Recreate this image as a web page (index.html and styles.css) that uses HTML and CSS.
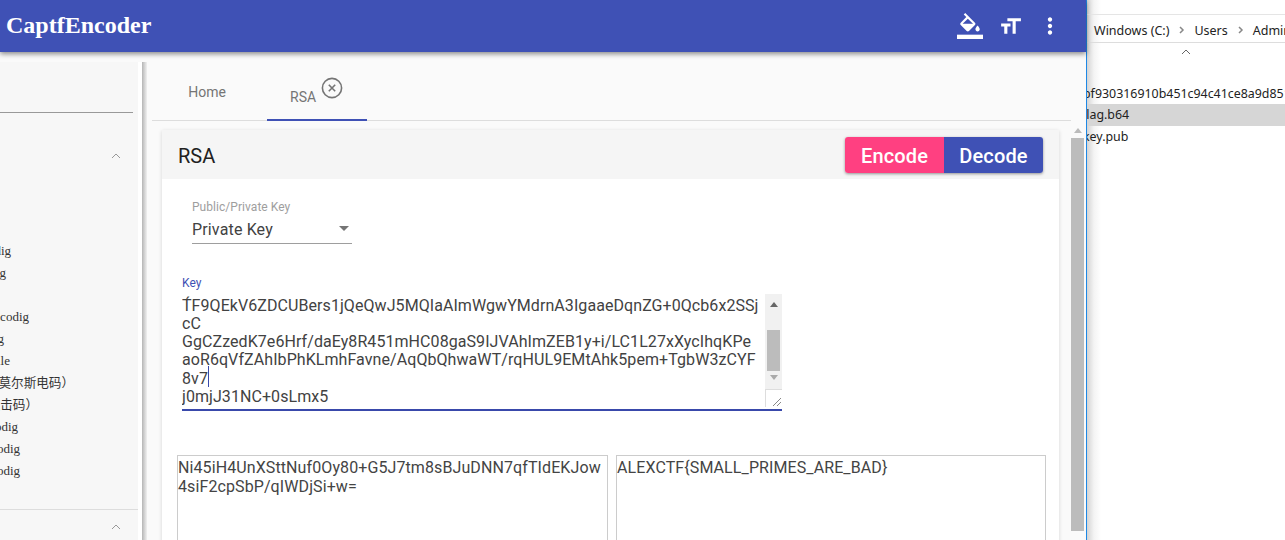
FILE: index.html
```html
<!DOCTYPE html>
<html lang="en">
<head>
<meta charset="utf-8">
<title>CaptfEncoder</title>
<link rel="stylesheet" href="styles.css">
</head>
<body>
<div class="screen">
  <div class="app">
    <header class="appbar">
      <h1 class="brand">CaptfEncoder</h1>
      <div class="actions">
        <button class="icon-btn"><svg class="i-fill" viewBox="0 0 24 24"><path d="M16.56 8.94L7.62 0 6.21 1.41l2.38 2.38-5.15 5.15c-.59.59-.59 1.54 0 2.12l5.5 5.5c.29.29.68.44 1.06.44s.77-.15 1.06-.44l5.5-5.5c.59-.58.59-1.53 0-2.12zM5.21 10L10 5.21 14.79 10H5.21zM19 11.5s-2 2.17-2 3.5c0 1.1.9 2 2 2s2-.9 2-2c0-1.33-2-3.5-2-3.5z"/><path d="M0 20h24v4H0z"/></svg></button>
        <button class="icon-btn"><svg class="i-size" viewBox="0 0 24 24"><path d="M9 4v3h5v12h3V7h5V4H9zm-6 8h3v7h3v-7h3V9H3v3z"/></svg></button>
        <button class="icon-btn"><svg class="i-more" viewBox="0 0 24 24"><path d="M12 8c1.1 0 2-.9 2-2s-.9-2-2-2-2 .9-2 2 .9 2 2 2zm0 2c-1.1 0-2 .9-2 2s.9 2 2 2 2-.9 2-2-.9-2-2-2zm0 6c-1.1 0-2 .9-2 2s.9 2 2 2 2-.9 2-2-.9-2-2-2z"/></svg></button>
      </div>
    </header>
    <div class="body">
      <aside class="sidebar">
        <div class="search-line"></div>
        <div class="chev-row"><svg class="chev" viewBox="0 0 10 6"><path d="M1 5l4-4 4 4"/></svg></div>
        <ul class="menu">
          <li class="e11">Encodig</li>
          <li class="e6">Encodig</li>
          <li class="e-blank">&nbsp;</li>
          <li class="e29">Encodig</li>
          <li class="e4">Encodig</li>
          <li class="e10">File</li>
          <li class="e70">（莫尔斯电码）</li>
          <li class="e30">（敲击码）</li>
          <li class="e18">Encodig</li>
          <li class="e20">Encodig</li>
          <li class="e20">Encodig</li>
        </ul>
        <div class="side-divider"></div>
        <div class="chev-row chev-row-2"><svg class="chev" viewBox="0 0 10 6"><path d="M1 5l4-4 4 4"/></svg></div>
      </aside>
      <div class="side-shadow"></div>
      <main class="content">
        <nav class="tabs">
          <div class="tab tab-home">Home</div>
          <div class="tab tab-active"><span class="tab-label">RSA</span><svg class="tab-close" viewBox="0 0 22 22"><circle cx="11" cy="11" r="9.6"/><path d="M7.8 7.8l6.4 6.4M14.2 7.8l-6.4 6.4"/></svg></div>
        </nav>
        <div class="pane">
          <section class="card">
            <div class="card-head">
              <h2 class="card-title">RSA</h2>
              <div class="btn-group">
                <button class="btn btn-encode">Encode</button>
                <button class="btn btn-decode">Decode</button>
              </div>
            </div>
            <div class="card-body">
              <div class="select-field">
                <div class="field-label">Public/Private Key</div>
                <div class="select-value"><span>Private Key</span><span class="caret"></span></div>
              </div>
              <div class="key-field">
                <div class="key-label">Key</div>
                <div class="key-box">
                  <div class="key-text">
                    <div>T&#x301;F9QEkV6ZDCUBers1jQeQwJ5MQIaAImWgwYMdrnA3IgaaeDqnZG+0Qcb6x2SSj</div>
                    <div>cC</div>
                    <div>GgCZzedK7e6Hrf/daEy8R451mHC08gaS9IJVAhImZEB1y+i/LC1L27xXycIhqKPe</div>
                    <div>aoR6qVfZAhIbPhKLmhFavne/AqQbQhwaWT/rqHUL9EMtAhk5pem+TgbW3zCYF</div>
                    <div>8v7<span class="text-cursor"></span></div>
                    <div>j0mjJ31NC+0sLmx5</div>
                  </div>
                  <div class="key-scroll">
                    <div class="key-track">
                      <span class="arr arr-up"></span>
                      <span class="key-thumb"></span>
                      <span class="arr arr-down"></span>
                    </div>
                    <div class="resizer"><svg viewBox="0 0 10 10"><path d="M1 9l8-8M5 9l4-4"/></svg></div>
                  </div>
                </div>
              </div>
              <div class="outputs">
                <div class="output">Ni45iH4UnXSttNuf0Oy80+G5J7tm8sBJuDNN7qfTIdEKJow<br>4siF2cpSbP/qIWDjSi+w=</div>
                <div class="output">ALEXCTF{SMALL_PRIMES_ARE_BAD}</div>
              </div>
            </div>
          </section>
          <div class="page-scroll">
            <span class="arr arr-up arr-page"></span>
            <span class="page-thumb"></span>
          </div>
        </div>
      </main>
    </div>
  </div>
  <div class="explorer">
    <div class="ex-top"></div>
    <div class="crumbs">
      <span>Windows (C:)</span><svg class="sep" viewBox="0 0 25 10"><path d="M11 2l3 3-3 3"/></svg><span>Users</span><svg class="sep" viewBox="0 0 25 10"><path d="M11 2l3 3-3 3"/></svg><span>Administrator</span>
    </div>
    <div class="ex-lower">
      <div class="ex-head"><svg class="chev chev-dark" viewBox="0 0 10 6"><path d="M1 5l4-4 4 4"/></svg></div>
      <ul class="files">
        <li class="file-hash">bf930316910b451c94c41ce8a9d851f</li>
        <li class="file-sel">flag.b64</li>
        <li class="file-key">key.pub</li>
      </ul>
    </div>
  </div>
</div>
</body>
</html>
```
FILE: styles.css
```css
* { box-sizing: border-box; }
html, body { margin: 0; padding: 0; height: 540px; overflow: hidden; background: #fff; }
ul { list-style: none; margin: 0; padding: 0; }
h1, h2 { margin: 0; }
button { border: 0; padding: 0; background: none; font: inherit; color: inherit; }

.screen { display: flex; width: 1285px; height: 540px; overflow: hidden; }
.app { width: 1087px; flex: none; height: 540px; display: flex; flex-direction: column; background: #fafafa; border-right: 1px solid #1e88e5; font-family: Roboto, sans-serif; position: relative; }

.appbar { height: 52px; flex: none; background: #3f51b5; color: #fff; display: flex; align-items: center; justify-content: space-between; padding: 0 16px 0 6px; box-shadow: 0 2px 5px rgba(0,0,0,.45); position: relative; z-index: 2; }
.brand { font-family: "Liberation Serif", serif; font-weight: 700; font-size: 24px; line-height: 50px; height: 52px; }
.actions { display: flex; }
.icon-btn { width: 40px; height: 40px; display: flex; align-items: center; justify-content: center; }
.icon-btn svg { fill: #fff; display: block; }
.i-fill { width: 26px; height: 26px; }
.i-size { width: 25px; height: 25px; }
.i-more { width: 26px; height: 26px; }

.body { flex: 1; display: flex; min-height: 0; }

.sidebar { width: 138px; flex: none; margin-top: 10px; background: #f7f7f7; font-family: "Liberation Serif", "Noto Sans CJK SC", serif; font-size: 13px; color: #333; overflow: hidden; }
.search-line { height: 1px; width: 133px; background: #999; margin-top: 50px; }
.chev-row { height: 14px; margin-top: 36px; display: flex; justify-content: flex-end; padding-right: 17px; align-items: center; }
.chev { width: 10px; height: 6px; fill: none; stroke: #999; stroke-width: 1; display: block; }
.chev-dark { stroke: #666; }
.menu { margin-top: 77px; }
.menu li { height: 22px; line-height: 22px; display: flex; justify-content: flex-end; white-space: nowrap; }
.menu li.e11 { padding-right: 127px; }
.menu li.e6 { padding-right: 132px; }
.menu li.e29 { padding-right: 109px; }
.menu li.e4 { padding-right: 134px; }
.menu li.e10 { padding-right: 128px; }
.menu li.e70 { padding-right: 64px; font-size: 12.6px; }
.menu li.e30 { padding-right: 100px; font-size: 12.6px; }
.menu li.e18 { padding-right: 120px; }
.menu li.e20 { padding-right: 118px; }
.side-divider { height: 1px; background: #ddd; margin-top: 27px; }
.chev-row-2 { margin-top: 10px; }

.side-shadow { width: 9px; flex: none; margin-top: 10px; background: linear-gradient(to right, #fff 0, #fff 4px, #b5b5b5 4px, #f0f0f0 9px); }

.content { flex: 1; min-width: 0; padding-left: 5px; display: flex; flex-direction: column; }
.tabs { height: 59px; flex: none; margin-top: 10px; display: flex; border-bottom: 1px solid #ddd; font-size: 14px; color: #757575; margin-right: 15px; }
.tab { display: flex; }
.tab-home { width: 110px; justify-content: center; padding-top: 22px; margin-right: 5px; }
.tab-active { width: 100px; border-bottom: 2px solid #3f51b5; height: 59px; padding: 27px 0 0 23px; }
.tab-close { width: 22px; height: 22px; margin: -12px 0 0 5px; fill: none; stroke: #757575; stroke-width: 1.6; flex: none; }

.pane { flex: 1; min-height: 0; display: flex; overflow: hidden; }
.card { width: 897px; margin: 9px 0 0 10px; flex: none; background: #fff; box-shadow: 0 1px 4px rgba(0,0,0,.15); height: 500px; }
.card-head { height: 49px; background: #f5f5f5; display: flex; align-items: center; justify-content: space-between; padding: 0 16px 0 16px; }
.card-title { font-size: 20px; line-height: 24px; padding-top: 2px; font-weight: 400; color: #212121; }
.btn-group { display: flex; border-radius: 3px; overflow: hidden; box-shadow: 0 1px 3px rgba(0,0,0,.4); }
.btn { width: 99px; height: 36px; padding-top: 2px; font-family: Roboto, sans-serif; font-size: 20px; font-weight: 500; letter-spacing: .15px; color: #fff; }
.btn-encode { background: #ff4081; }
.btn-decode { background: #3f51b5; }

.card-body { padding: 21px 13px 0 15px; }
.select-field { width: 160px; margin-left: 15px; }
.field-label { font-size: 12px; line-height: 14px; color: #9e9e9e; letter-spacing: .05px; }
.select-value { display: flex; justify-content: space-between; align-items: center; height: 30px; padding: 2px 3px 0 0; font-size: 16px; letter-spacing: .15px; color: #424242; border-bottom: 1px solid #9e9e9e; }
.caret { width: 0; height: 0; border: 5px solid transparent; border-top-color: #757575; border-bottom: 0; margin-bottom: 2px; }

.key-field { margin: 32px 0 0 5px; width: 600px; }
.key-label { font-size: 12px; line-height: 14px; color: #3f51b5; }
.key-box { display: flex; height: 117px; margin-top: 4px; border-bottom: 2px solid #3949ab; }
.key-text { flex: 1; height: 115px; overflow: hidden; display: flex; flex-direction: column; justify-content: flex-end; padding-bottom: 3px; font-size: 16px; line-height: 18.2px; letter-spacing: .07px; color: #424242; white-space: nowrap; }
.text-cursor { display: inline-block; width: 1px; height: 21px; margin: -4px 0; background: #3949ab; vertical-align: 1px; }
.key-scroll { width: 17px; flex: none; display: flex; flex-direction: column; height: 113px; }
.key-track { height: 95px; background: #f1f1f1; display: flex; flex-direction: column; align-items: center; }
.key-thumb { width: 13px; height: 41px; background: #bcbcbc; margin-top: 23px; }
.resizer { flex: 1; border-left: 1px solid #ddd; border-top: 1px solid #ddd; display: flex; align-items: flex-end; justify-content: flex-end; }
.resizer svg { width: 10px; height: 10px; fill: none; stroke: #888; stroke-width: 1; display: block; }
.arr { width: 0; height: 0; border: 4px solid transparent; flex: none; }
.arr-up { border-bottom: 5px solid #666; border-top: 0; margin-top: 8px; }
.arr-down { border-top: 5px solid #aaa; border-bottom: 0; margin-top: 4px; }

.outputs { display: flex; gap: 8px; margin-top: 44px; }
.output { width: 431px; height: 200px; flex: none; border: 1px solid #ccc; font-size: 16px; line-height: 18.6px; letter-spacing: .1px; padding: 3px 0 0 0; color: #444; white-space: nowrap; }
.output + .output { width: 430px; }

.page-scroll { width: 13px; margin-left: 12px; flex: none; display: flex; flex-direction: column; align-items: center; padding-top: 7px; }
.arr-page { border-bottom-color: #bbb; margin-top: 0; }
.page-thumb { width: 13px; height: 393px; background: #bcbcbc; margin-top: 5px; }

.explorer { flex: 1; min-width: 0; overflow: hidden; background: linear-gradient(to right, #d4d4d4, #f4f4f4 7px, #fff 14px); font-family: "Noto Sans", sans-serif; font-size: 12.5px; color: #222; }
.ex-top { height: 15px; border-bottom: 1px solid #e5e5e5; }
.crumbs { height: 28px; display: flex; align-items: center; padding: 3px 0 0 7px; white-space: nowrap; border-bottom: 1px solid #ddd; }
.crumbs span { flex: none; }
.sep { width: 25px; height: 10px; flex: none; fill: none; stroke: #888; stroke-width: 1.5; }
.ex-lower { height: 497px; }
.ex-head { height: 20px; display: flex; padding: 6px 0 0 94px; }
.files { margin-top: 20px; white-space: nowrap; font-size: 12.4px; }
.files li { height: 21px; line-height: 21px; }
.file-hash { margin-left: -4px; }
.file-sel { background: #d6d6d6; text-indent: -5px; height: 22px !important; line-height: 22px !important; }
.file-key { margin-left: -4px; }
```
